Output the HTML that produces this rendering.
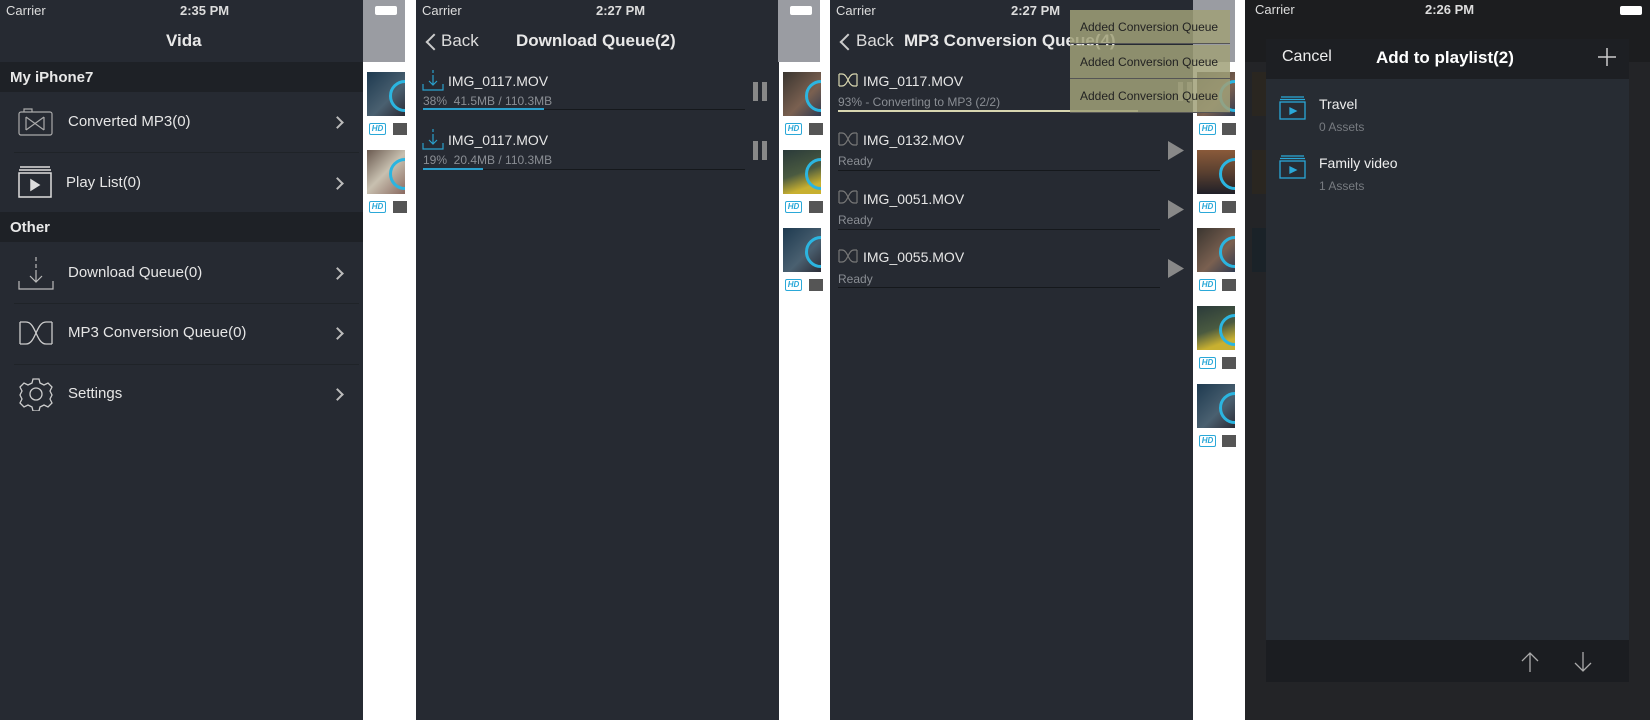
<!DOCTYPE html>
<html><head><meta charset="utf-8"><style>
*{margin:0;padding:0;box-sizing:border-box}
body{width:1650px;height:720px;background:#fff;position:relative;overflow:hidden;font-family:"Liberation Sans",sans-serif;color:#e8e8e8}
.a{position:absolute}
.p{position:absolute;top:0;height:720px;background:#262a32}
.st{font-size:13px;color:#ddd}
.row{font-size:15px;color:#e6e6e6}
.chev{position:absolute;width:9px;height:9px;border-right:2px solid #bbb;border-top:2px solid #bbb;transform:rotate(45deg)}
.sec{position:absolute;left:0;width:363px;height:30px;background:#1e2126;font-weight:bold;font-size:15px;padding:7px 10px}
.sep{position:absolute;height:1px;background:#1f2328}
.th{position:absolute;width:38px;height:44px;overflow:hidden;background:linear-gradient(135deg,#1e3a50,#4a6070 60%,#2b2b35)}
.th:after{content:"";position:absolute;left:22px;top:8px;width:26px;height:26px;border:3px solid #2bb5e0;border-radius:50%}
.hd{position:absolute;width:17px;height:12px;border:1.5px solid #2aa8d8;border-radius:2px;font-size:8px;font-weight:bold;font-style:italic;color:#2aa8d8;text-align:center;line-height:9px}
.hd2{position:absolute;width:14px;height:12px;background:#555}
.sub{font-size:12px;color:#8a8e94}
.toast{position:absolute;left:1070px;width:160px;height:34px;background:rgba(160,160,120,.85);color:#222;font-size:12px;padding:10px 0 0 10px;border-bottom:1px solid #555}
</style></head><body>
<!-- Panel1 -->
<div class="p" style="left:0;width:363px"></div>
<div class="a st" style="left:6px;top:3px">Carrier</div>
<div class="a st" style="left:180px;top:3px;font-weight:bold">2:35 PM</div>
<div class="a" style="left:166px;top:31px;font-size:17px;font-weight:bold">Vida</div>
<div class="sec" style="top:62px">My iPhone7</div>
<div class="sec" style="top:212px">Other</div>
<svg class="a" style="left:18px;top:108px" width="36" height="28" viewBox="0 0 36 28" fill="none" stroke="#aaa" stroke-width="1.2"><rect x="1" y="4" width="33" height="23" rx="2"/><path d="M6 4V1h8v3"/><path d="M8 9v13M26 9v13M8 9l18 13M8 22L26 9"/></svg>
<div class="a row" style="left:68px;top:113px">Converted MP3(0)</div>
<div class="chev" style="left:333px;top:118px"></div>
<div class="sep" style="left:14px;top:152px;width:345px"></div>
<svg class="a" style="left:18px;top:166px" width="34" height="32" viewBox="0 0 34 32" fill="none" stroke="#ddd" stroke-width="1.5"><path d="M2 1h30M1 4h32"/><rect x="1" y="7" width="32" height="24"/><path d="M13 14v10l8-5z" fill="#ddd"/></svg>
<div class="a row" style="left:66px;top:174px">Play List(0)</div>
<div class="chev" style="left:333px;top:179px"></div>
<svg class="a" style="left:18px;top:256px" width="36" height="34" viewBox="0 0 36 34" fill="none" stroke="#bbb" stroke-width="1.2"><path d="M18 1v4M18 8v4M18 14v12M12 20l6 6 6-6M1 25v8h34v-8"/></svg>
<div class="a row" style="left:68px;top:264px">Download Queue(0)</div>
<div class="chev" style="left:333px;top:269px"></div>
<div class="sep" style="left:14px;top:303px;width:345px"></div>
<svg class="a" style="left:19px;top:321px" width="34" height="24" viewBox="0 0 34 24" fill="none" stroke="#ccc" stroke-width="1.3"><path d="M1 1v22M33 1v22M1 1h6c10 0 10 22 20 22h6M1 23h6c10 0 10-22 20-22h6"/></svg>
<div class="a row" style="left:68px;top:324px">MP3 Conversion Queue(0)</div>
<div class="chev" style="left:333px;top:329px"></div>
<div class="sep" style="left:14px;top:364px;width:345px"></div>
<svg class="a" style="left:19px;top:377px" width="34" height="34" viewBox="0 0 34 34" fill="none" stroke="#ccc" stroke-width="1.3"><circle cx="17" cy="17" r="6"/><path d="M14 2h6l1 4 4 2 4-2 4 4-2 4 2 4-2 4 2 4-4 4-4-2-4 2-1 4h-6l-1-4-4-2-4 2-4-4 2-4-2-4 2-4-2-4 4-4 4 2 4-2z"/></svg>
<div class="a row" style="left:68px;top:385px">Settings</div>
<div class="chev" style="left:333px;top:390px"></div>
<div class="a" style="left:363px;top:0;width:42px;height:62px;background:#9a9ca2"></div>
<div class="a" style="left:375px;top:6px;width:22px;height:9px;background:#fff;border-radius:2px"></div>
<div class="th" style="left:367px;top:72px"></div><div class="hd" style="left:369px;top:123px">HD</div><div class="hd2" style="left:393px;top:123px"></div>
<div class="th" style="left:367px;top:150px;background:linear-gradient(135deg,#6a5a50,#c8c0b0 50%,#8a6a60)"></div><div class="hd" style="left:369px;top:201px">HD</div><div class="hd2" style="left:393px;top:201px"></div>

<!-- Panel2 -->
<div class="p" style="left:416px;width:363px"></div>
<div class="a st" style="left:422px;top:3px">Carrier</div>
<div class="a st" style="left:596px;top:3px;font-weight:bold">2:27 PM</div>
<div class="chev" style="left:428px;top:36px;transform:rotate(-135deg);border-color:#ccc;width:12px;height:12px"></div>
<div class="a" style="left:441px;top:31px;font-size:17px;color:#ddd">Back</div>
<div class="a" style="left:516px;top:31px;font-size:17px;font-weight:bold">Download Queue(2)</div>
<svg class="a" style="left:422px;top:69px" width="22" height="22" viewBox="0 0 22 22" fill="none" stroke="#2aa0cc" stroke-width="1.2"><path d="M11 1v3M11 6v10M7 12l4 4 4-4M1 15v6h20v-6"/></svg>
<div class="a row" style="left:448px;top:73px;font-size:14px">IMG_0117.MOV</div>
<div class="a sub" style="left:423px;top:94px">38%&nbsp; 41.5MB / 110.3MB</div>
<div class="a" style="left:423px;top:109px;width:322px;height:1px;background:#15181c"></div>
<div class="a" style="left:423px;top:108px;width:121px;height:2px;background:#2aa0cc"></div>
<div class="a" style="left:753px;top:82px;width:5px;height:19px;background:#888"></div><div class="a" style="left:762px;top:82px;width:5px;height:19px;background:#888"></div>
<svg class="a" style="left:422px;top:128px" width="22" height="22" viewBox="0 0 22 22" fill="none" stroke="#2aa0cc" stroke-width="1.2"><path d="M11 1v3M11 6v10M7 12l4 4 4-4M1 15v6h20v-6"/></svg>
<div class="a row" style="left:448px;top:132px;font-size:14px">IMG_0117.MOV</div>
<div class="a sub" style="left:423px;top:153px">19%&nbsp; 20.4MB / 110.3MB</div>
<div class="a" style="left:423px;top:169px;width:322px;height:1px;background:#15181c"></div>
<div class="a" style="left:423px;top:168px;width:60px;height:2px;background:#2aa0cc"></div>
<div class="a" style="left:753px;top:141px;width:5px;height:19px;background:#888"></div><div class="a" style="left:762px;top:141px;width:5px;height:19px;background:#888"></div>
<div class="a" style="left:778px;top:0;width:42px;height:62px;background:#9a9ca2"></div>
<div class="a" style="left:790px;top:6px;width:22px;height:9px;background:#fff;border-radius:2px"></div>
<div class="th" style="left:783px;top:72px;background:linear-gradient(135deg,#3a3530,#7a6050 60%,#303a50)"></div><div class="hd" style="left:785px;top:123px">HD</div><div class="hd2" style="left:809px;top:123px"></div>
<div class="th" style="left:783px;top:150px;background:linear-gradient(160deg,#2a3a3a,#4a5a40 50%,#c8b030 80%)"></div><div class="hd" style="left:785px;top:201px">HD</div><div class="hd2" style="left:809px;top:201px"></div>
<div class="th" style="left:783px;top:228px"></div><div class="hd" style="left:785px;top:279px">HD</div><div class="hd2" style="left:809px;top:279px"></div>

<!-- Panel3 -->
<div class="p" style="left:830px;width:363px"></div>
<div class="a st" style="left:836px;top:3px">Carrier</div>
<div class="a st" style="left:1011px;top:3px;font-weight:bold">2:27 PM</div>
<div class="chev" style="left:842px;top:36px;transform:rotate(-135deg);border-color:#ccc;width:12px;height:12px"></div>
<div class="a" style="left:856px;top:31px;font-size:17px;color:#ddd">Back</div>
<div class="a" style="left:904px;top:31px;font-size:17px;font-weight:bold">MP3 Conversion Queue(4)</div>
<svg class="a" style="left:838px;top:73px" width="20" height="14" viewBox="0 0 20 14" fill="none" stroke="#d8d6b0" stroke-width="1.2"><path d="M1 1v12M19 1v12M1 1h3c6 0 6 12 12 12h3M1 13h3c6 0 6-12 12-12h3"/></svg>
<div class="a row" style="left:863px;top:73px;font-size:14px">IMG_0117.MOV</div>
<div class="a sub" style="left:838px;top:95px">93% - Converting to MP3 (2/2)</div>
<div class="a" style="left:838px;top:110px;width:300px;height:2px;background:#d8d6b0"></div>
<div class="a" style="left:1178px;top:82px;width:5px;height:19px;background:#888"></div><div class="a" style="left:1187px;top:82px;width:5px;height:19px;background:#888"></div>

<svg class="a" style="left:838px;top:132px" width="20" height="14" viewBox="0 0 20 14" fill="none" stroke="#777" stroke-width="1.2"><path d="M1 1v12M19 1v12M1 1h3c6 0 6 12 12 12h3M1 13h3c6 0 6-12 12-12h3"/></svg>
<div class="a row" style="left:863px;top:132px;font-size:14px">IMG_0132.MOV</div>
<div class="a sub" style="left:838px;top:154px">Ready</div>
<div class="a" style="left:838px;top:170px;width:322px;height:1px;background:#15181c"></div>
<svg class="a" style="left:1168px;top:141px" width="16" height="19"><path d="M0 0L16 9.5 0 19z" fill="#888"/></svg>

<svg class="a" style="left:838px;top:190px" width="20" height="14" viewBox="0 0 20 14" fill="none" stroke="#777" stroke-width="1.2"><path d="M1 1v12M19 1v12M1 1h3c6 0 6 12 12 12h3M1 13h3c6 0 6-12 12-12h3"/></svg>
<div class="a row" style="left:863px;top:191px;font-size:14px">IMG_0051.MOV</div>
<div class="a sub" style="left:838px;top:213px">Ready</div>
<div class="a" style="left:838px;top:229px;width:322px;height:1px;background:#15181c"></div>
<svg class="a" style="left:1168px;top:200px" width="16" height="19"><path d="M0 0L16 9.5 0 19z" fill="#888"/></svg>

<svg class="a" style="left:838px;top:249px" width="20" height="14" viewBox="0 0 20 14" fill="none" stroke="#777" stroke-width="1.2"><path d="M1 1v12M19 1v12M1 1h3c6 0 6 12 12 12h3M1 13h3c6 0 6-12 12-12h3"/></svg>
<div class="a row" style="left:863px;top:249px;font-size:14px">IMG_0055.MOV</div>
<div class="a sub" style="left:838px;top:272px">Ready</div>
<div class="a" style="left:838px;top:287px;width:322px;height:1px;background:#15181c"></div>
<svg class="a" style="left:1168px;top:259px" width="16" height="19"><path d="M0 0L16 9.5 0 19z" fill="#888"/></svg>

<div class="a" style="left:1193px;top:0;width:42px;height:62px;background:#9a9ca2"></div>
<div class="th" style="left:1197px;top:72px;background:linear-gradient(135deg,#3a3530,#7a6050 60%,#303a50)"></div><div class="hd" style="left:1199px;top:123px">HD</div><div class="hd2" style="left:1222px;top:123px"></div>
<div class="th" style="left:1197px;top:150px;background:linear-gradient(180deg,#8a5a3a,#5a4030 50%,#202028)"></div><div class="hd" style="left:1199px;top:201px">HD</div><div class="hd2" style="left:1222px;top:201px"></div>
<div class="th" style="left:1197px;top:228px;background:linear-gradient(135deg,#3a3530,#7a6050 60%,#303a50)"></div><div class="hd" style="left:1199px;top:279px">HD</div><div class="hd2" style="left:1222px;top:279px"></div>
<div class="th" style="left:1197px;top:306px;background:linear-gradient(160deg,#2a3a3a,#4a5a40 50%,#c8b030 80%)"></div><div class="hd" style="left:1199px;top:357px">HD</div><div class="hd2" style="left:1222px;top:357px"></div>
<div class="th" style="left:1197px;top:384px"></div><div class="hd" style="left:1199px;top:435px">HD</div><div class="hd2" style="left:1222px;top:435px"></div>
<div class="toast" style="top:10px">Added Conversion Queue</div>
<div class="toast" style="top:45px">Added Conversion Queue</div>
<div class="toast" style="top:79px">Added Conversion Queue</div>

<!-- Panel4 -->
<div class="p" style="left:1245px;width:405px;background:#232427"></div>
<div class="a" style="left:1245px;top:0;width:405px;height:62px;background:#1c1d1f"></div>
<div class="a st" style="left:1255px;top:2px">Carrier</div>
<div class="a st" style="left:1425px;top:2px;font-weight:bold">2:26 PM</div>
<div class="a" style="left:1620px;top:6px;width:22px;height:9px;background:#fff;border-radius:2px"></div>
<div class="a" style="left:1252px;top:72px;width:14px;height:44px;background:#2a2620"></div>
<div class="a" style="left:1252px;top:150px;width:14px;height:44px;background:#2a2620"></div>
<div class="a" style="left:1252px;top:228px;width:14px;height:44px;background:#1a2228"></div>
<div class="a" style="left:1266px;top:39px;width:363px;height:40px;background:#1d1f23"></div>
<div class="a" style="left:1266px;top:79px;width:363px;height:561px;background:#272c33"></div>
<div class="a" style="left:1266px;top:640px;width:363px;height:42px;background:#1b1d21"></div>
<div class="a" style="left:1282px;top:48px;font-size:16px;color:#eee">Cancel</div>
<div class="a" style="left:1376px;top:48px;font-size:17px;font-weight:bold;color:#fff">Add to playlist(2)</div>
<svg class="a" style="left:1598px;top:48px" width="18" height="18"><path d="M9 0v18M0 9h18" stroke="#ccc" stroke-width="1.5"/></svg>
<svg class="a" style="left:1279px;top:96px" width="27" height="24" viewBox="0 0 27 24" fill="none" stroke="#2aa8d8" stroke-width="1.3"><path d="M2 1h23M1 3.5h25"/><rect x="1" y="6" width="25" height="17"/><path d="M11 12v6l6-3z" fill="#2aa8d8"/></svg>
<div class="a" style="left:1319px;top:96px;font-size:14px;color:#eee">Travel</div>
<div class="a" style="left:1319px;top:120px;font-size:12px;color:#777b80">0 Assets</div>
<svg class="a" style="left:1279px;top:155px" width="27" height="24" viewBox="0 0 27 24" fill="none" stroke="#2aa8d8" stroke-width="1.3"><path d="M2 1h23M1 3.5h25"/><rect x="1" y="6" width="25" height="17"/><path d="M11 12v6l6-3z" fill="#2aa8d8"/></svg>
<div class="a" style="left:1319px;top:155px;font-size:14px;color:#eee">Family video</div>
<div class="a" style="left:1319px;top:179px;font-size:12px;color:#777b80">1 Assets</div>
<svg class="a" style="left:1520px;top:652px" width="20" height="20" fill="none" stroke="#aaa" stroke-width="1.3"><path d="M10 20V1M2 9l8-8 8 8"/></svg>
<svg class="a" style="left:1573px;top:652px" width="20" height="20" fill="none" stroke="#aaa" stroke-width="1.3"><path d="M10 0v19M2 11l8 8 8-8"/></svg>
</body></html>
